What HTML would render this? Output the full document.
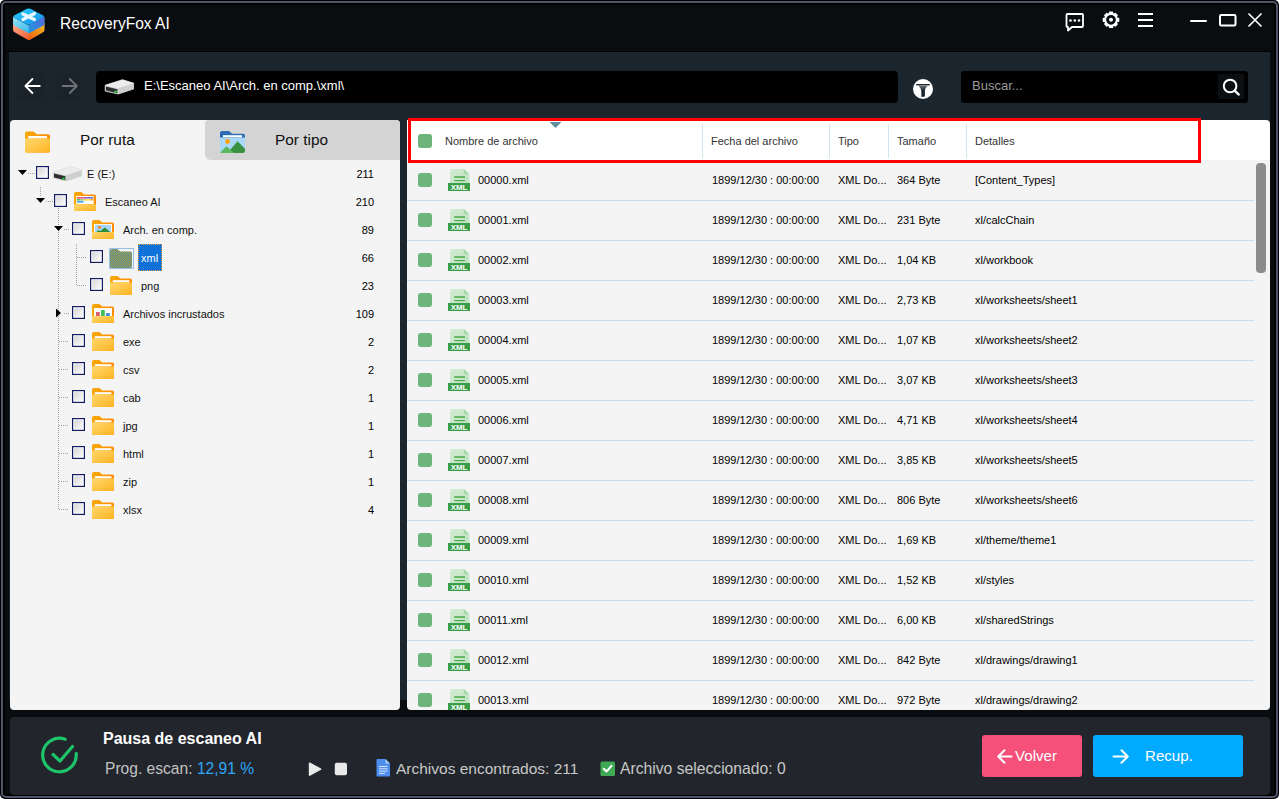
<!DOCTYPE html>
<html><head><meta charset="utf-8">
<style>
*{margin:0;padding:0;box-sizing:border-box}
html,body{width:1279px;height:799px;overflow:hidden;background:#fff;font-family:"Liberation Sans",sans-serif}
.a{position:absolute}
#frame{position:absolute;left:0;top:0;width:1279px;height:799px;background:#000;border-radius:5px}
#brd{position:absolute;left:1px;top:1px;width:1277px;height:797px;border:2px solid #4d576b;border-radius:5px;background:#000}
#win{position:absolute;left:5px;top:5px;width:1269px;height:789px;background:#0a0d10}
#main{position:absolute;left:9px;top:52px;width:1261px;height:648px;background:#1b252d;border-radius:1px 1px 0 0}
#title{left:60px;top:13px;color:#fff;font-size:16.3px;line-height:20px;transform:scaleX(0.955);transform-origin:0 0;white-space:nowrap}
#path{left:96px;top:71px;width:802px;height:32px;background:#000;border-radius:4px}
#pathtxt{left:144px;top:78px;color:#fff;font-size:13px;line-height:16px}
#search{left:961px;top:71px;width:287px;height:32px;background:#000;border-radius:3px}
#searchtxt{left:972px;top:78px;color:#9b9b9b;font-size:13px;line-height:16px}
#left{left:10px;top:120px;width:390px;height:590px;background:#f4f4f4;border-radius:4px 4px 4px 4px}
#tab2{left:205px;top:120px;width:195px;height:40px;background:#d4d4d4;border-radius:4px 4px 0 6px}
.tabt{font-size:15.4px;color:#111;line-height:20px}
#right{left:407px;top:124px;width:863px;height:586px;background:#f4f4f4;border-radius:0 4px 4px 4px}
#hdr{left:407px;top:120px;width:863px;height:40px;background:#fff;border-radius:0 4px 0 0}
#status{left:10px;top:717px;width:1260px;height:78px;background:#22262c;border-radius:4px}
.t11{font-size:11px;line-height:14px;color:#000}
.t12{font-size:12px;line-height:14px;color:#222}
.chk{width:14px;height:14px;background:#6cb47a;border-radius:3px}
.t11h{font-size:11px;line-height:14px;color:#333}
.t11r{font-size:11px;line-height:14px;color:#000;white-space:nowrap}
#rows{left:407px;top:120px;width:863px;height:590px;overflow:hidden;border-radius:0 4px 4px 4px}
.btn{border-radius:3px}
</style></head><body>
<div id="frame"></div><div id="brd"></div><div id="win"></div>
<div class="a" style="left:5px;top:51px;width:1269px;height:1px;background:#000"></div>
<div id="main"></div>

<svg class="a" style="left:12.3px;top:7.6px" width="33.4" height="33" viewBox="0 0 32 33" preserveAspectRatio="none">
<defs>
<linearGradient id="lgL" x1="0" y1="0" x2="1" y2="1"><stop offset="0" stop-color="#ffb08a"/><stop offset="1" stop-color="#f0401a"/></linearGradient>
<linearGradient id="lgR" x1="0" y1="1" x2="1" y2="0"><stop offset="0" stop-color="#f25a12"/><stop offset="1" stop-color="#f2c020"/></linearGradient>
<linearGradient id="lgB" x1="0" y1="0" x2="1" y2="1"><stop offset="0" stop-color="#26d0ff"/><stop offset="1" stop-color="#1a8ee8"/></linearGradient>
<linearGradient id="lgBL" x1="0" y1="0" x2="1" y2="1"><stop offset="0" stop-color="#9ae4f4"/><stop offset="1" stop-color="#16a8e8"/></linearGradient>
<linearGradient id="lgBR" x1="0" y1="1" x2="1" y2="0"><stop offset="0" stop-color="#1a9ae0"/><stop offset="1" stop-color="#5a66e0"/></linearGradient>
</defs>
<path d="M1,15 L16,23.5 L31,15 L31,22 Q31,23.5 29.5,24.3 L17.5,31.6 Q16,32.4 14.5,31.6 L2.5,24.3 Q1,23.5 1,22 Z" fill="url(#lgL)"/>
<path d="M16,23.5 L31,15 L31,22 Q31,23.5 29.5,24.3 L17.5,31.6 Q16,32.4 16,32 Z" fill="url(#lgR)"/>
<path d="M1,9 L16,17.5 L31,9 L31,15.5 Q31,17 29.5,17.8 L17.5,24.6 Q16,25.4 14.5,24.6 L2.5,17.8 Q1,17 1,15.5 Z" fill="url(#lgBL)"/>
<path d="M16,17.5 L31,9 L31,15.5 Q31,17 29.5,17.8 L17.5,24.6 Q16,25.4 16,25 Z" fill="url(#lgBR)"/>
<path d="M14.3,0.8 Q16,0 17.7,0.8 L30,7.6 Q31.5,8.6 30,9.6 L17.7,16.6 Q16,17.5 14.3,16.6 L2,9.6 Q0.5,8.6 2,7.6 Z" fill="url(#lgB)"/>
<path d="M10.5,6 L21.5,11.5 M21.5,5.5 L10.5,11.5" stroke="#e6f7fb" stroke-width="3.2" stroke-linecap="round"/>
</svg>
<div class="a" id="title">RecoveryFox AI</div>
<svg class="a" style="left:1060px;top:8px" width="100" height="26" viewBox="1060 8 100 26">
<path d="M1067.5,14 H1082 Q1083,14 1083,15 V26 Q1083,27 1082,27 H1072 L1068,30.5 V27 H1067.5 Q1066.5,27 1066.5,26 V15 Q1066.5,14 1067.5,14 Z" fill="none" stroke="#fff" stroke-width="1.8" stroke-linejoin="round"/>
<circle cx="1070.5" cy="20.5" r="1.3" fill="#fff"/><circle cx="1074.8" cy="20.5" r="1.3" fill="#fff"/><circle cx="1079" cy="20.5" r="1.3" fill="#fff"/>
<g transform="translate(1111,19.8)">
<circle r="5.9" fill="none" stroke="#fff" stroke-width="2.1"/>
<g fill="#fff"><rect x="-2.1" y="-8.3" width="4.2" height="3" rx="0.7"/><rect x="-2.1" y="5.3" width="4.2" height="3" rx="0.7"/><rect x="-8.3" y="-2.1" width="3" height="4.2" rx="0.7"/><rect x="5.3" y="-2.1" width="3" height="4.2" rx="0.7"/>
<g transform="rotate(45)"><rect x="-2.1" y="-8.1" width="4.2" height="3" rx="0.7"/><rect x="-2.1" y="5.1" width="4.2" height="3" rx="0.7"/><rect x="-8.1" y="-2.1" width="3" height="4.2" rx="0.7"/><rect x="5.1" y="-2.1" width="3" height="4.2" rx="0.7"/></g></g>
<circle r="2" fill="#fff"/>
</g>
<rect x="1138" y="13" width="15" height="2" fill="#fff"/><rect x="1138" y="19" width="15" height="2" fill="#fff"/><rect x="1138" y="25" width="15" height="2" fill="#fff"/>
</svg>
<svg class="a" style="left:1185px;top:8px" width="85" height="26" viewBox="1185 8 85 26">
<rect x="1190" y="20" width="17" height="2" rx="1" fill="#fff"/>
<rect x="1220" y="15" width="15.5" height="10.5" rx="1.2" fill="none" stroke="#fff" stroke-width="2"/>
<path d="M1248.5,13.5 L1261.5,26.5 M1261.5,13.5 L1248.5,26.5" stroke="#fff" stroke-width="1.6"/>
</svg>

<div class="a" id="path"></div>

<svg class="a" style="left:14px;top:70px" width="70" height="30" viewBox="14 70 70 30">
<rect x="16" y="73" width="28.5" height="25.5" fill="#1a232a"/>
<rect x="56" y="73" width="24.5" height="25.5" fill="#1a232a"/>
<path d="M39.8,86 H25.8 M32.4,79 L25.4,86 L32.4,93" fill="none" stroke="#fff" stroke-width="1.8" stroke-linecap="round" stroke-linejoin="round"/>
<path d="M62.6,86 H76.4 M69.8,79 L76.8,86 L69.8,93" fill="none" stroke="#6e7378" stroke-width="1.8" stroke-linecap="round" stroke-linejoin="round"/>
</svg>
<svg class="a" style="left:104px;top:78.5px" width="30" height="16"><use href="#drv"/></svg>
<div class="a" id="pathtxt">E:\Escaneo AI\Arch. en comp.\xml\</div>
<svg class="a" style="left:908px;top:74px" width="30" height="30" viewBox="908 74 30 30">
<rect x="909" y="74" width="29" height="29" fill="#1c262e"/>
<circle cx="923" cy="89" r="10" fill="#fff"/>
<defs><linearGradient id="fun" x1="0" y1="0" x2="0" y2="1"><stop offset="0" stop-color="#6a747c"/><stop offset="0.45" stop-color="#1b252d"/><stop offset="1" stop-color="#1b252d"/></linearGradient></defs>
<rect x="916.2" y="84" width="13.6" height="1.4" fill="#1b252d"/>
<path d="M918.3,85.4 H927.7 Q925,88 924.9,90.5 L924.9,96.4 L921.4,96.9 L921.3,90.5 Q921,88 918.3,85.4 Z" fill="url(#fun)"/>
</svg>
<div class="a" id="search"></div>
<div class="a" id="searchtxt">Buscar...</div>
<svg class="a" style="left:1217px;top:73px" width="28" height="28" viewBox="1217 73 28 28">
<rect x="1218" y="74" width="26" height="25" fill="#0c0f12"/>
<circle cx="1230.1" cy="86" r="6.3" fill="none" stroke="#fff" stroke-width="2"/>
<path d="M1234.7,90.6 L1238.8,94.6" stroke="#fff" stroke-width="2.2" stroke-linecap="round"/>
</svg>



<svg width="0" height="0" style="position:absolute">
<defs>
<linearGradient id="fBack" x1="0" y1="0" x2="1" y2="0"><stop offset="0" stop-color="#f7a80a"/><stop offset="1" stop-color="#ff8a00"/></linearGradient>
<linearGradient id="fFront" x1="0" y1="0" x2="1" y2="1"><stop offset="0" stop-color="#ffd870"/><stop offset="1" stop-color="#ffb420"/></linearGradient>
<linearGradient id="cbG" x1="0" y1="0" x2="1" y2="1"><stop offset="0" stop-color="#d6d6d6"/><stop offset="1" stop-color="#fbfbfb"/></linearGradient>
<symbol id="fold" viewBox="0 0 22 19">
<path d="M0,1.8 Q0,0 1.8,0 H7.3 L10.3,2.6 H20.2 Q22,2.6 22,4.4 V17.5 Q22,19 20.5,19 H1.5 Q0,19 0,17.5 Z" fill="url(#fBack)"/>
<rect x="2.8" y="4.2" width="16.6" height="2.2" fill="#fff"/>
<path d="M0,6.4 H22 V17.5 Q22,19 20.5,19 H1.5 Q0,19 0,17.5 Z" fill="url(#fFront)"/>
</symbol>
<symbol id="foldImg" viewBox="0 0 22 19">
<path d="M0,1.8 Q0,0 1.8,0 H7.3 L10.3,2.6 H20.2 Q22,2.6 22,4.4 V17.5 Q22,19 20.5,19 H1.5 Q0,19 0,17.5 Z" fill="url(#fBack)"/>
<rect x="2" y="4.1" width="18" height="8.2" fill="#fff"/>
<rect x="3" y="5" width="16" height="7.2" fill="#a6d4f5"/>
<circle cx="7.5" cy="7.3" r="1.4" fill="#ff7a00"/>
<path d="M4,12.2 L6.5,10.2 L8.5,11 L12.8,7.6 L18.5,12.2 Z" fill="#2e8b3a"/>
<path d="M0,12.1 H22 V17.5 Q22,19 20.5,19 H1.5 Q0,19 0,17.5 Z" fill="url(#fFront)"/>
</symbol>
<symbol id="foldChart" viewBox="0 0 22 19">
<path d="M0,1.8 Q0,0 1.8,0 H7.3 L10.3,2.6 H20.2 Q22,2.6 22,4.4 V17.5 Q22,19 20.5,19 H1.5 Q0,19 0,17.5 Z" fill="url(#fBack)"/>
<rect x="2" y="4.1" width="18" height="8.2" fill="#fff"/>
<rect x="4" y="8" width="3.8" height="4.2" fill="#d9606e"/>
<rect x="9" y="6" width="3.8" height="6.2" fill="#3fbf5a"/>
<rect x="14" y="9" width="3.8" height="3.2" fill="#4a8fd8"/>
<path d="M0,12.1 H22 V17.5 Q22,19 20.5,19 H1.5 Q0,19 0,17.5 Z" fill="url(#fFront)"/>
</symbol>
<symbol id="foldScan" viewBox="0 0 22 19">
<path d="M0,1.8 Q0,0 1.8,0 H7.3 L10.3,2.6 H20.2 Q22,2.6 22,4.4 V17.5 Q22,19 20.5,19 H1.5 Q0,19 0,17.5 Z" fill="url(#fBack)"/>
<rect x="2.3" y="4" width="17.4" height="8.2" fill="#fff"/>
<rect x="3" y="5" width="3.2" height="1.6" fill="#ef5350"/><rect x="6.3" y="5" width="3.2" height="1.6" fill="#ec407a"/><rect x="9.6" y="5" width="3.2" height="1.6" fill="#ab47bc"/><rect x="12.9" y="5" width="3.2" height="1.6" fill="#7e57c2"/><rect x="16.2" y="5" width="3" height="1.6" fill="#5c6bc0"/>
<rect x="3" y="7" width="3.2" height="1.6" fill="#66bb6a"/><rect x="6.3" y="7" width="3.2" height="1.6" fill="#9ccc65"/><rect x="9.6" y="7" width="3.2" height="1.6" fill="#d4e157"/><rect x="12.9" y="7" width="3.2" height="1.6" fill="#ffee58"/><rect x="16.2" y="7" width="3" height="1.6" fill="#ffa726"/>
<rect x="3" y="9" width="6.5" height="1.6" fill="#42a5f5"/>
<path d="M0,12.2 H22 V17.5 Q22,19 20.5,19 H1.5 Q0,19 0,17.5 Z" fill="url(#fFront)"/>
</symbol>
<symbol id="drv" viewBox="0 0 30 16">
<path d="M1.2,6.2 L18.5,0.7 L30,4.3 L30,9.8 L14.2,15 L1.2,12.1 Z" fill="#d6d6d6" stroke="#d6d6d6" stroke-width="0.8" stroke-linejoin="round"/>
<path d="M1.2,6.2 L18.5,0.7 L30,4.3 L14.2,9.2 Z" fill="#ececec"/>
<path d="M14.2,9.2 L30,4.3 L30,9.8 L14.2,15 Z" fill="#cfcfcf"/>
<path d="M2,7.4 L13.4,10.2 L13.4,14.2 L2,11.5 Z" fill="#2e2e2e"/>
<circle cx="11.6" cy="12.6" r="1.2" fill="#22d83a"/>
</symbol>
<symbol id="cb" viewBox="0 0 13 13">
<rect x="0" y="0" width="13" height="13" fill="#121c62"/>
<rect x="1.2" y="1.2" width="10.6" height="10.6" fill="#fff"/>
<rect x="2.2" y="2.2" width="8.6" height="8.6" fill="url(#cbG)"/>
</symbol>
<symbol id="xmlI" viewBox="0 0 23 23">
<defs><linearGradient id="pgG" x1="0" y1="0" x2="1" y2="1"><stop offset="0" stop-color="#d4ecd4"/><stop offset="1" stop-color="#bfe2c0"/></linearGradient></defs>
<path d="M2,0 H15.8 L21.3,5.2 V14 H2 Z" fill="url(#pgG)"/>
<path d="M15.8,0 L21.3,5.2 H15.8 Z" fill="#a8d8aa"/>
<rect x="6.2" y="7.2" width="10.8" height="1.6" fill="#4caf50"/>
<rect x="6.2" y="11" width="10.8" height="1.2" fill="#4caf50"/>
<rect x="0" y="14" width="22" height="8" fill="#3a9e48"/>
<text x="11.1" y="20.8" text-anchor="middle" font-family="Liberation Sans" font-weight="bold" font-size="7.9" fill="#fff">XML</text>
</symbol>
</defs></svg>
<div class="a" id="left"></div>
<div class="a" id="tab2"></div>
<div class="a tabt" style="left:80px;top:130px">Por ruta</div>
<div class="a tabt" style="left:275px;top:130px">Por tipo</div>

<svg class="a" style="left:25px;top:131px" width="25" height="22" viewBox="0 0 22 19"><use href="#fold"/></svg>
<svg class="a" style="left:220px;top:131px" width="25" height="22" viewBox="0 0 25 22">
<path d="M0,2 Q0,0 2,0 H9 L12,2.8 H23 Q25,2.8 25,4.8 V8 H0 Z" fill="#2b6cb3"/>
<rect x="3" y="4.2" width="19" height="2.2" fill="#fff"/>
<path d="M0,6.4 H25 V20 Q25,22 23,22 H2 Q0,22 0,20 Z" fill="#a9d8f8"/>
<circle cx="7.5" cy="10.5" r="2.4" fill="#ffa000"/>
<path d="M10,19 L17.5,10.3 L25,17.8 V20 Q25,22 23,22 H10 Z" fill="#3a9140"/>
<path d="M0.3,21.5 L6.5,15.2 L14,22 H2 Q0.3,22 0.3,21.5 Z" fill="#5cb85f"/>
</svg>
<svg class="a" style="left:0;top:0" width="400" height="600" viewBox="0 0 400 600"><path d="M28,173.5 H35" stroke="#a0a0a0" stroke-width="1" stroke-dasharray="1 1"/><path d="M40.5,187 V196" stroke="#a0a0a0" stroke-width="1" stroke-dasharray="1 1"/><path d="M46,201.5 H53" stroke="#a0a0a0" stroke-width="1" stroke-dasharray="1 1"/><path d="M58.5,208 V509" stroke="#a0a0a0" stroke-width="1" stroke-dasharray="1 1"/><path d="M64,229.5 H69" stroke="#a0a0a0" stroke-width="1" stroke-dasharray="1 1"/><path d="M64,313.5 H69" stroke="#a0a0a0" stroke-width="1" stroke-dasharray="1 1"/><path d="M59,341.5 H69" stroke="#a0a0a0" stroke-width="1" stroke-dasharray="1 1"/><path d="M59,369.5 H69" stroke="#a0a0a0" stroke-width="1" stroke-dasharray="1 1"/><path d="M59,397.5 H69" stroke="#a0a0a0" stroke-width="1" stroke-dasharray="1 1"/><path d="M59,425.5 H69" stroke="#a0a0a0" stroke-width="1" stroke-dasharray="1 1"/><path d="M59,453.5 H69" stroke="#a0a0a0" stroke-width="1" stroke-dasharray="1 1"/><path d="M59,481.5 H69" stroke="#a0a0a0" stroke-width="1" stroke-dasharray="1 1"/><path d="M59,509.5 H69" stroke="#a0a0a0" stroke-width="1" stroke-dasharray="1 1"/><path d="M76.5,244 V285" stroke="#a0a0a0" stroke-width="1" stroke-dasharray="1 1"/><path d="M77,257.5 H86" stroke="#a0a0a0" stroke-width="1" stroke-dasharray="1 1"/><path d="M77,285.5 H86" stroke="#a0a0a0" stroke-width="1" stroke-dasharray="1 1"/><path d="M18,170 H27 L22.5,175 Z" fill="#000"/><path d="M36,198 H45 L40.5,203 Z" fill="#000"/><path d="M54,226 H63 L58.5,231 Z" fill="#000"/><path d="M56,308.5 L61,313 L56,317.5 Z" fill="#000"/></svg>
<svg class="a" style="left:36px;top:166px" width="13" height="13"><use href="#cb"/></svg>
<svg class="a" style="left:52px;top:166px" width="30" height="16"><use href="#drv"/></svg>
<div class="a t11" style="left:87px;top:167px;color:#111">E (E:)</div>
<div class="a t11" style="left:300px;width:74px;text-align:right;top:167px">211</div>
<svg class="a" style="left:54px;top:194px" width="13" height="13"><use href="#cb"/></svg>
<svg class="a" style="left:74px;top:192px" width="22" height="19" viewBox="0 0 22 19"><use href="#foldScan"/></svg>
<div class="a t11" style="left:105px;top:195px;color:#111">Escaneo AI</div>
<div class="a t11" style="left:300px;width:74px;text-align:right;top:195px">210</div>
<svg class="a" style="left:72px;top:222px" width="13" height="13"><use href="#cb"/></svg>
<svg class="a" style="left:92px;top:220px" width="22" height="19" viewBox="0 0 22 19"><use href="#foldImg"/></svg>
<div class="a t11" style="left:123px;top:223px;color:#111">Arch. en comp.</div>
<div class="a t11" style="left:300px;width:74px;text-align:right;top:223px">89</div>
<svg class="a" style="left:90px;top:250px" width="13" height="13"><use href="#cb"/></svg>
<svg class="a" style="left:108px;top:247px" width="26" height="22" viewBox="0 0 26 22">
<defs><pattern id="dith" width="2" height="2" patternUnits="userSpaceOnUse"><rect width="2" height="2" fill="#a89a50"/><rect width="1" height="1" fill="#4a8a9a"/><rect x="1" y="1" width="1" height="1" fill="#5a9a80"/></pattern></defs>
<rect x="1.5" y="1.5" width="24" height="20" fill="none" stroke="#3a8ae0" stroke-width="1" stroke-dasharray="1 1"/>
<path d="M2,3.8 Q2,2 3.8,2 H9.3 L12.3,4.6 H22.2 Q24,4.6 24,6.4 V19.5 Q24,21 22.5,21 H3.5 Q2,21 2,19.5 Z" fill="url(#dith)"/>
</svg>
<div class="a" style="left:138px;top:244px;width:24px;height:27px;background:#0e72d8;outline:1px dotted #e89a40;outline-offset:-1px"></div>
<div class="a t11" style="left:141px;top:251px;color:#fff">xml</div>
<div class="a t11" style="left:300px;width:74px;text-align:right;top:251px">66</div>
<svg class="a" style="left:90px;top:278px" width="13" height="13"><use href="#cb"/></svg>
<svg class="a" style="left:110px;top:276px" width="22" height="19" viewBox="0 0 22 19"><use href="#fold"/></svg>
<div class="a t11" style="left:141px;top:279px;color:#111">png</div>
<div class="a t11" style="left:300px;width:74px;text-align:right;top:279px">23</div>
<svg class="a" style="left:72px;top:306px" width="13" height="13"><use href="#cb"/></svg>
<svg class="a" style="left:92px;top:304px" width="22" height="19" viewBox="0 0 22 19"><use href="#foldChart"/></svg>
<div class="a t11" style="left:123px;top:307px;color:#111">Archivos incrustados</div>
<div class="a t11" style="left:300px;width:74px;text-align:right;top:307px">109</div>
<svg class="a" style="left:72px;top:334px" width="13" height="13"><use href="#cb"/></svg>
<svg class="a" style="left:92px;top:332px" width="22" height="19" viewBox="0 0 22 19"><use href="#fold"/></svg>
<div class="a t11" style="left:123px;top:335px;color:#111">exe</div>
<div class="a t11" style="left:300px;width:74px;text-align:right;top:335px">2</div>
<svg class="a" style="left:72px;top:362px" width="13" height="13"><use href="#cb"/></svg>
<svg class="a" style="left:92px;top:360px" width="22" height="19" viewBox="0 0 22 19"><use href="#fold"/></svg>
<div class="a t11" style="left:123px;top:363px;color:#111">csv</div>
<div class="a t11" style="left:300px;width:74px;text-align:right;top:363px">2</div>
<svg class="a" style="left:72px;top:390px" width="13" height="13"><use href="#cb"/></svg>
<svg class="a" style="left:92px;top:388px" width="22" height="19" viewBox="0 0 22 19"><use href="#fold"/></svg>
<div class="a t11" style="left:123px;top:391px;color:#111">cab</div>
<div class="a t11" style="left:300px;width:74px;text-align:right;top:391px">1</div>
<svg class="a" style="left:72px;top:418px" width="13" height="13"><use href="#cb"/></svg>
<svg class="a" style="left:92px;top:416px" width="22" height="19" viewBox="0 0 22 19"><use href="#fold"/></svg>
<div class="a t11" style="left:123px;top:419px;color:#111">jpg</div>
<div class="a t11" style="left:300px;width:74px;text-align:right;top:419px">1</div>
<svg class="a" style="left:72px;top:446px" width="13" height="13"><use href="#cb"/></svg>
<svg class="a" style="left:92px;top:444px" width="22" height="19" viewBox="0 0 22 19"><use href="#fold"/></svg>
<div class="a t11" style="left:123px;top:447px;color:#111">html</div>
<div class="a t11" style="left:300px;width:74px;text-align:right;top:447px">1</div>
<svg class="a" style="left:72px;top:474px" width="13" height="13"><use href="#cb"/></svg>
<svg class="a" style="left:92px;top:472px" width="22" height="19" viewBox="0 0 22 19"><use href="#fold"/></svg>
<div class="a t11" style="left:123px;top:475px;color:#111">zip</div>
<div class="a t11" style="left:300px;width:74px;text-align:right;top:475px">1</div>
<svg class="a" style="left:72px;top:502px" width="13" height="13"><use href="#cb"/></svg>
<svg class="a" style="left:92px;top:500px" width="22" height="19" viewBox="0 0 22 19"><use href="#fold"/></svg>
<div class="a t11" style="left:123px;top:503px;color:#111">xlsx</div>
<div class="a t11" style="left:300px;width:74px;text-align:right;top:503px">4</div>
<div class="a" id="right"></div>
<div class="a" id="hdr"></div>
<svg class="a" style="left:0;top:0" width="1279" height="170" viewBox="0 0 1279 170"><rect x="702" y="124" width="1" height="34" fill="#d2e6f0"/><rect x="829" y="124" width="1" height="34" fill="#d2e6f0"/><rect x="888" y="124" width="1" height="34" fill="#d2e6f0"/><rect x="966" y="124" width="1" height="34" fill="#d2e6f0"/><path d="M549.5,122 H561.5 L555.5,128 Z" fill="#5f8f9c"/></svg>
<div class="a chk" style="left:418px;top:134px"></div>
<div class="a t11h" style="left:445px;top:134px">Nombre de archivo</div>
<div class="a t11h" style="left:711px;top:134px">Fecha del archivo</div>
<div class="a t11h" style="left:838px;top:134px">Tipo</div>
<div class="a t11h" style="left:897px;top:134px">Tamaño</div>
<div class="a t11h" style="left:975px;top:134px">Detalles</div>
<div class="a" id="rows">
<div class="a chk" style="left:11px;top:53px"></div>
<svg class="a" style="left:41px;top:49px" width="23" height="23"><use href="#xmlI"/></svg>
<div class="a t11r" style="left:71px;top:53px">00000.xml</div>
<div class="a t11r" style="left:305px;top:53px">1899/12/30 : 00:00:00</div>
<div class="a t11r" style="left:431px;top:53px">XML Do...</div>
<div class="a t11r" style="left:490px;top:53px">364 Byte</div>
<div class="a t11r" style="left:568px;top:53px">[Content_Types]</div>
<div class="a" style="left:0;top:80px;width:847px;height:1px;background:#c9dcf2"></div>
<div class="a chk" style="left:11px;top:93px"></div>
<svg class="a" style="left:41px;top:89px" width="23" height="23"><use href="#xmlI"/></svg>
<div class="a t11r" style="left:71px;top:93px">00001.xml</div>
<div class="a t11r" style="left:305px;top:93px">1899/12/30 : 00:00:00</div>
<div class="a t11r" style="left:431px;top:93px">XML Do...</div>
<div class="a t11r" style="left:490px;top:93px">231 Byte</div>
<div class="a t11r" style="left:568px;top:93px">xl/calcChain</div>
<div class="a" style="left:0;top:120px;width:847px;height:1px;background:#c9dcf2"></div>
<div class="a chk" style="left:11px;top:133px"></div>
<svg class="a" style="left:41px;top:129px" width="23" height="23"><use href="#xmlI"/></svg>
<div class="a t11r" style="left:71px;top:133px">00002.xml</div>
<div class="a t11r" style="left:305px;top:133px">1899/12/30 : 00:00:00</div>
<div class="a t11r" style="left:431px;top:133px">XML Do...</div>
<div class="a t11r" style="left:490px;top:133px">1,04 KB</div>
<div class="a t11r" style="left:568px;top:133px">xl/workbook</div>
<div class="a" style="left:0;top:160px;width:847px;height:1px;background:#c9dcf2"></div>
<div class="a chk" style="left:11px;top:173px"></div>
<svg class="a" style="left:41px;top:169px" width="23" height="23"><use href="#xmlI"/></svg>
<div class="a t11r" style="left:71px;top:173px">00003.xml</div>
<div class="a t11r" style="left:305px;top:173px">1899/12/30 : 00:00:00</div>
<div class="a t11r" style="left:431px;top:173px">XML Do...</div>
<div class="a t11r" style="left:490px;top:173px">2,73 KB</div>
<div class="a t11r" style="left:568px;top:173px">xl/worksheets/sheet1</div>
<div class="a" style="left:0;top:200px;width:847px;height:1px;background:#c9dcf2"></div>
<div class="a chk" style="left:11px;top:213px"></div>
<svg class="a" style="left:41px;top:209px" width="23" height="23"><use href="#xmlI"/></svg>
<div class="a t11r" style="left:71px;top:213px">00004.xml</div>
<div class="a t11r" style="left:305px;top:213px">1899/12/30 : 00:00:00</div>
<div class="a t11r" style="left:431px;top:213px">XML Do...</div>
<div class="a t11r" style="left:490px;top:213px">1,07 KB</div>
<div class="a t11r" style="left:568px;top:213px">xl/worksheets/sheet2</div>
<div class="a" style="left:0;top:240px;width:847px;height:1px;background:#c9dcf2"></div>
<div class="a chk" style="left:11px;top:253px"></div>
<svg class="a" style="left:41px;top:249px" width="23" height="23"><use href="#xmlI"/></svg>
<div class="a t11r" style="left:71px;top:253px">00005.xml</div>
<div class="a t11r" style="left:305px;top:253px">1899/12/30 : 00:00:00</div>
<div class="a t11r" style="left:431px;top:253px">XML Do...</div>
<div class="a t11r" style="left:490px;top:253px">3,07 KB</div>
<div class="a t11r" style="left:568px;top:253px">xl/worksheets/sheet3</div>
<div class="a" style="left:0;top:280px;width:847px;height:1px;background:#c9dcf2"></div>
<div class="a chk" style="left:11px;top:293px"></div>
<svg class="a" style="left:41px;top:289px" width="23" height="23"><use href="#xmlI"/></svg>
<div class="a t11r" style="left:71px;top:293px">00006.xml</div>
<div class="a t11r" style="left:305px;top:293px">1899/12/30 : 00:00:00</div>
<div class="a t11r" style="left:431px;top:293px">XML Do...</div>
<div class="a t11r" style="left:490px;top:293px">4,71 KB</div>
<div class="a t11r" style="left:568px;top:293px">xl/worksheets/sheet4</div>
<div class="a" style="left:0;top:320px;width:847px;height:1px;background:#c9dcf2"></div>
<div class="a chk" style="left:11px;top:333px"></div>
<svg class="a" style="left:41px;top:329px" width="23" height="23"><use href="#xmlI"/></svg>
<div class="a t11r" style="left:71px;top:333px">00007.xml</div>
<div class="a t11r" style="left:305px;top:333px">1899/12/30 : 00:00:00</div>
<div class="a t11r" style="left:431px;top:333px">XML Do...</div>
<div class="a t11r" style="left:490px;top:333px">3,85 KB</div>
<div class="a t11r" style="left:568px;top:333px">xl/worksheets/sheet5</div>
<div class="a" style="left:0;top:360px;width:847px;height:1px;background:#c9dcf2"></div>
<div class="a chk" style="left:11px;top:373px"></div>
<svg class="a" style="left:41px;top:369px" width="23" height="23"><use href="#xmlI"/></svg>
<div class="a t11r" style="left:71px;top:373px">00008.xml</div>
<div class="a t11r" style="left:305px;top:373px">1899/12/30 : 00:00:00</div>
<div class="a t11r" style="left:431px;top:373px">XML Do...</div>
<div class="a t11r" style="left:490px;top:373px">806 Byte</div>
<div class="a t11r" style="left:568px;top:373px">xl/worksheets/sheet6</div>
<div class="a" style="left:0;top:400px;width:847px;height:1px;background:#c9dcf2"></div>
<div class="a chk" style="left:11px;top:413px"></div>
<svg class="a" style="left:41px;top:409px" width="23" height="23"><use href="#xmlI"/></svg>
<div class="a t11r" style="left:71px;top:413px">00009.xml</div>
<div class="a t11r" style="left:305px;top:413px">1899/12/30 : 00:00:00</div>
<div class="a t11r" style="left:431px;top:413px">XML Do...</div>
<div class="a t11r" style="left:490px;top:413px">1,69 KB</div>
<div class="a t11r" style="left:568px;top:413px">xl/theme/theme1</div>
<div class="a" style="left:0;top:440px;width:847px;height:1px;background:#c9dcf2"></div>
<div class="a chk" style="left:11px;top:453px"></div>
<svg class="a" style="left:41px;top:449px" width="23" height="23"><use href="#xmlI"/></svg>
<div class="a t11r" style="left:71px;top:453px">00010.xml</div>
<div class="a t11r" style="left:305px;top:453px">1899/12/30 : 00:00:00</div>
<div class="a t11r" style="left:431px;top:453px">XML Do...</div>
<div class="a t11r" style="left:490px;top:453px">1,52 KB</div>
<div class="a t11r" style="left:568px;top:453px">xl/styles</div>
<div class="a" style="left:0;top:480px;width:847px;height:1px;background:#c9dcf2"></div>
<div class="a chk" style="left:11px;top:493px"></div>
<svg class="a" style="left:41px;top:489px" width="23" height="23"><use href="#xmlI"/></svg>
<div class="a t11r" style="left:71px;top:493px">00011.xml</div>
<div class="a t11r" style="left:305px;top:493px">1899/12/30 : 00:00:00</div>
<div class="a t11r" style="left:431px;top:493px">XML Do...</div>
<div class="a t11r" style="left:490px;top:493px">6,00 KB</div>
<div class="a t11r" style="left:568px;top:493px">xl/sharedStrings</div>
<div class="a" style="left:0;top:520px;width:847px;height:1px;background:#c9dcf2"></div>
<div class="a chk" style="left:11px;top:533px"></div>
<svg class="a" style="left:41px;top:529px" width="23" height="23"><use href="#xmlI"/></svg>
<div class="a t11r" style="left:71px;top:533px">00012.xml</div>
<div class="a t11r" style="left:305px;top:533px">1899/12/30 : 00:00:00</div>
<div class="a t11r" style="left:431px;top:533px">XML Do...</div>
<div class="a t11r" style="left:490px;top:533px">842 Byte</div>
<div class="a t11r" style="left:568px;top:533px">xl/drawings/drawing1</div>
<div class="a" style="left:0;top:560px;width:847px;height:1px;background:#c9dcf2"></div>
<div class="a chk" style="left:11px;top:573px"></div>
<svg class="a" style="left:41px;top:569px" width="23" height="23"><use href="#xmlI"/></svg>
<div class="a t11r" style="left:71px;top:573px">00013.xml</div>
<div class="a t11r" style="left:305px;top:573px">1899/12/30 : 00:00:00</div>
<div class="a t11r" style="left:431px;top:573px">XML Do...</div>
<div class="a t11r" style="left:490px;top:573px">972 Byte</div>
<div class="a t11r" style="left:568px;top:573px">xl/drawings/drawing2</div>
<div class="a" style="left:849px;top:43px;width:10px;height:110px;background:#8c8c8c;border-radius:4px"></div>
</div>
<div class="a" style="left:408px;top:118px;width:793px;height:45px;border:3px solid #ff0000"></div>
<div class="a" id="status"></div>
<svg class="a" style="left:38px;top:733px" width="44" height="44" viewBox="38 733 44 44">
<path d="M65.2,739.2 A16.8,16.8 0 1 0 76.2,753.5" fill="none" stroke="#1ec46a" stroke-width="3.2" stroke-linecap="round"/>
<path d="M53,754.5 L60,761 L72.5,746.5" fill="none" stroke="#1ec46a" stroke-width="3.2" stroke-linecap="round" stroke-linejoin="round"/>
</svg>
<div class="a" style="left:103px;top:730px;font-size:16px;line-height:18px;font-weight:bold;color:#fff">Pausa de escaneo AI</div>
<div class="a" style="left:105px;top:760px;font-size:15.6px;line-height:18px;color:#c2c2c2">Prog. escan: <span style="color:#2ea7f5">12,91 %</span></div>
<svg class="a" style="left:305px;top:758px" width="45" height="22" viewBox="305 758 45 22">
<path d="M309.6,763.2 L320.6,769.1 L309.6,775.1 Z" fill="#ebebeb" stroke="#ebebeb" stroke-width="1.6" stroke-linejoin="round"/>
<rect x="334.8" y="762.8" width="12.2" height="12.4" rx="2" fill="#e8e8e8"/>
</svg>
<svg class="a" style="left:376px;top:759px" width="15" height="18" viewBox="0 0 15 18">
<path d="M0.5,1 Q0.5,0 1.5,0 H9.5 L14,4.5 V16.5 Q14,17.5 13,17.5 H1.5 Q0.5,17.5 0.5,16.5 Z" fill="#4d8ef0"/>
<path d="M9.5,0 V4.5 H14 Z" fill="#a8c8f8"/>
<rect x="3" y="7" width="8.5" height="1" fill="#d8e6fb"/><rect x="3" y="9.3" width="8.5" height="1" fill="#d8e6fb"/><rect x="3" y="11.6" width="8.5" height="1" fill="#d8e6fb"/><rect x="3" y="13.9" width="6" height="1" fill="#d8e6fb"/>
</svg>
<div class="a" style="left:396px;top:760px;font-size:15.5px;line-height:18px;color:#c8c8c8">Archivos encontrados: 211</div>
<svg class="a" style="left:600px;top:761px" width="16" height="16" viewBox="0 0 16 16">
<rect x="0.5" y="0.5" width="14.5" height="14.5" rx="1.5" fill="#3faa56"/>
<path d="M3.8,7.8 L6.5,10.5 L11.5,4.8" fill="none" stroke="#fff" stroke-width="2" stroke-linecap="round" stroke-linejoin="round"/>
</svg>
<div class="a" style="left:620px;top:760px;font-size:15.7px;line-height:18px;color:#c8c8c8">Archivo seleccionado: 0</div>
<div class="a btn" style="left:982px;top:735px;width:100px;height:42px;background:#f5507a"></div>
<svg class="a" style="left:995px;top:747px" width="20" height="20" viewBox="995 747 20 20">
<path d="M1011.5,756.5 H998.5 M1004.5,750.3 L998.2,756.5 L1004.5,762.7" fill="none" stroke="#fff" stroke-width="2" stroke-linecap="round" stroke-linejoin="round"/>
</svg>
<div class="a" style="left:1015px;top:747px;font-size:15.1px;line-height:18px;color:#fff">Volver</div>
<div class="a btn" style="left:1093px;top:735px;width:150px;height:42px;background:#00aaff"></div>
<svg class="a" style="left:1110px;top:747px" width="22" height="20" viewBox="1110 747 22 20">
<path d="M1113.5,756.5 H1127.5 M1121.5,750.3 L1127.8,756.5 L1121.5,762.7" fill="none" stroke="#fff" stroke-width="2" stroke-linecap="round" stroke-linejoin="round"/>
</svg>
<div class="a" style="left:1145px;top:747px;font-size:15.1px;line-height:18px;color:#fff">Recup.</div>

</body></html>
